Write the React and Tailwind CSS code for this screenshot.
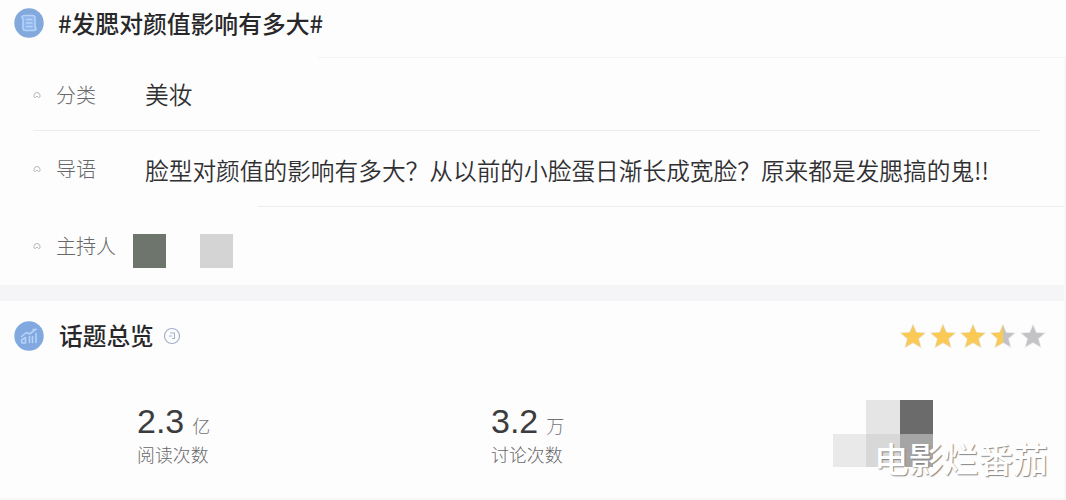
const stars = [1, 1, 1, 0.5, 0];

function TopicIcon() {
  return (
    <svg className="w-[30px] h-[30px] shrink-0" viewBox="0 0 30 30" fill="none">
      <circle cx="15" cy="15" r="14.7" fill="#83a8db" />
      <path
        d="M11 7.5h7.5q2.500 0 2.500 2.500v9l1 1.500q0 2-2.500 2h-8q-2.500 0-2.500-2.500V11L8 9.500q0-2 3-2z"
        fill="#8fb5ea"
        stroke="#b5d3fa"
        strokeWidth="1.600"
        strokeLinejoin="round"
      />
      <path d="M12 11.500h6.500M12 15h6.500M12 18.500h6.500" stroke="#b5d3fa" strokeWidth="1.300" />
    </svg>
  );
}

function ChartIcon() {
  return (
    <svg className="w-[30px] h-[30px] shrink-0" viewBox="0 0 30 30" fill="none">
      <circle cx="15" cy="15" r="14.700" fill="#82a9df" />
      <path
        d="M7.500 15.500l5-4 3 1.500 6-4.500M19 8.500h3.500M8 21.500q-1.500-2.500 1-3.500l2.500-1.500v5.500M8 22h3.500M15.500 21.500v-6M18.500 21.500v-6M22 21.500V12.500"
        stroke="#b5d3fa"
        strokeWidth="1.600"
        strokeLinecap="round"
        strokeLinejoin="round"
      />
    </svg>
  );
}

function StarIcon({ className }) {
  return (
    <svg className={"w-[26px] h-6 " + className} viewBox="0 0 26 24" fill="currentColor">
      <path
        d="M13 1.500l3 7.300 8.300.5-6.200 5.300 2.200 8L13 18.300l-7.300 4.300 2.200-8L1.700 9.300l8.300-.5z"
        stroke="currentColor"
        strokeOpacity="0.350"
        strokeWidth="1.500"
      />
    </svg>
  );
}

function Bullet() {
  return (
    <svg className="w-2 h-2 shrink-0" viewBox="0 0 8 8" fill="none" stroke="#b9b9bc">
      <path d="M1 6V4Q1.500 1.500 4 1.500T7 4v2L5.500 6.500 4 5 2.500 6.500z" />
    </svg>
  );
}

function Row({ label, className, children }) {
  return (
    <div className={"flex items-center pl-[33px] " + className}>
      <Bullet />
      <span className="ml-[15px] w-[89px] shrink-0 text-[20px] leading-6 font-light text-[#68686b]">
        {label}
      </span>
      {children}
    </div>
  );
}

function Stat({ value, unit, label, className }) {
  return (
    <div className={className}>
      <div className="flex items-baseline h-[38px]">
        <span className="font-['Liberation_Sans'] text-[34px] leading-[38px] text-[#3c3c3e]">{value}</span>
        <span className="ml-[8px] text-[18px] leading-6 font-light text-[#737377]">{unit}</span>
      </div>
      <p className="mt-[2px] text-[17.900px] leading-6 font-light text-[#68686b]">{label}</p>
    </div>
  );
}

export default function App() {
  return (
    <div className="relative w-[1066px] h-[500px] overflow-hidden bg-[#fdfdfd] whitespace-nowrap font-['Noto_Sans_CJK_SC',sans-serif]">
      <div className="flex h-[57px] items-start pl-[14px] pt-[8px]">
        <TopicIcon />
        <h1 className="ml-[14px] text-[23.800px] leading-[30px] font-medium text-[#28282a]">
          #发腮对颜值影响有多大#
        </h1>
      </div>
      <div className="ml-[318px] h-px bg-[#f4f4f5]" />

      <Row label="分类" className="h-[72px] pb-px pt-[3px]">
        <span className="-mt-[2px] text-[23.700px] leading-7 font-[350] text-[#303032]">美妆</span>
      </Row>
      <div className="ml-[33px] mr-[26px] h-px bg-[#ececee]" />

      <Row label="导语" className="h-[75px]">
        <span className="pt-[2px] text-[23.700px] leading-7 font-[350] text-[#303032]">
          脸型对颜值的影响有多大？从以前的小脸蛋日渐长成宽脸？原来都是发腮搞的鬼!!
        </span>
      </Row>
      <div className="ml-[258px] h-px bg-[#ededef]" />

      <Row label="主持人" className="h-[78px]">
        <div className="-ml-3 mt-[10px] flex gap-[34px]">
          <div className="w-[33px] h-[34px] bg-[#6d756c]" />
          <div className="w-[33px] h-[34px] bg-[#d4d4d4]" />
        </div>
      </Row>

      <div className="h-4 bg-[#f5f5f7]" />

      <div className="flex h-[70px] items-center pl-[14px] pr-[20px]">
        <ChartIcon />
        <h2 className="-mt-[2px] ml-[15px] text-[23.700px] leading-[30px] font-medium text-[#28282a]">话题总览</h2>
        <svg className="ml-[9px] w-[18px] h-[18px]" viewBox="0 0 18 18" fill="none" stroke="#a5b0cd">
          <circle cx="9" cy="9" r="7.500" strokeWidth="1.200" />
          <path d="M7 6h4.500v5.500H9M6 9h3" strokeWidth="1.100" />
        </svg>
        <div className="ml-auto flex gap-[4px]">
          {stars.map((fill, i) => (
            <div key={i} className="relative w-[26px] h-6">
              <StarIcon className="text-[#c3c3c5]" />
              <div className="absolute left-0 top-0 h-6 overflow-hidden" style={{ width: fill * 26 }}>
                <StarIcon className="text-[#fbca55]" />
              </div>
            </div>
          ))}
        </div>
      </div>

      <div className="flex pt-[30px]">
        <Stat value="2.3" unit="亿" label="阅读次数" className="pt-px ml-[137px] w-[354px]" />
        <Stat value="3.2" unit="万" label="讨论次数" className="pt-px w-[342px]" />
        <div className="-mt-px grid grid-cols-[33px_34px_33px] grid-rows-[34px_33px]">
          <div />
          <div className="bg-[#e5e5e6]" />
          <div className="bg-[#6b6b6b]" />
          <div className="bg-[#e9e9e9]" />
          <div className="bg-[#d8d8d9]" />
          <div className="bg-[#a5a5a5]" />
        </div>
      </div>

      <div className="absolute bottom-0 left-0 h-[2px] w-full bg-[#f7f7f8]" />
      <div className="absolute right-0 top-[58px] h-[442px] w-[2px] bg-[#f8f8f9]" />
      <span className="absolute left-[874px] top-[436px] text-[34.800px] leading-[44px] font-medium text-white [text-shadow:1px_1px_1px_#858585]">
        电影烂番茄
      </span>
    </div>
  );
}
